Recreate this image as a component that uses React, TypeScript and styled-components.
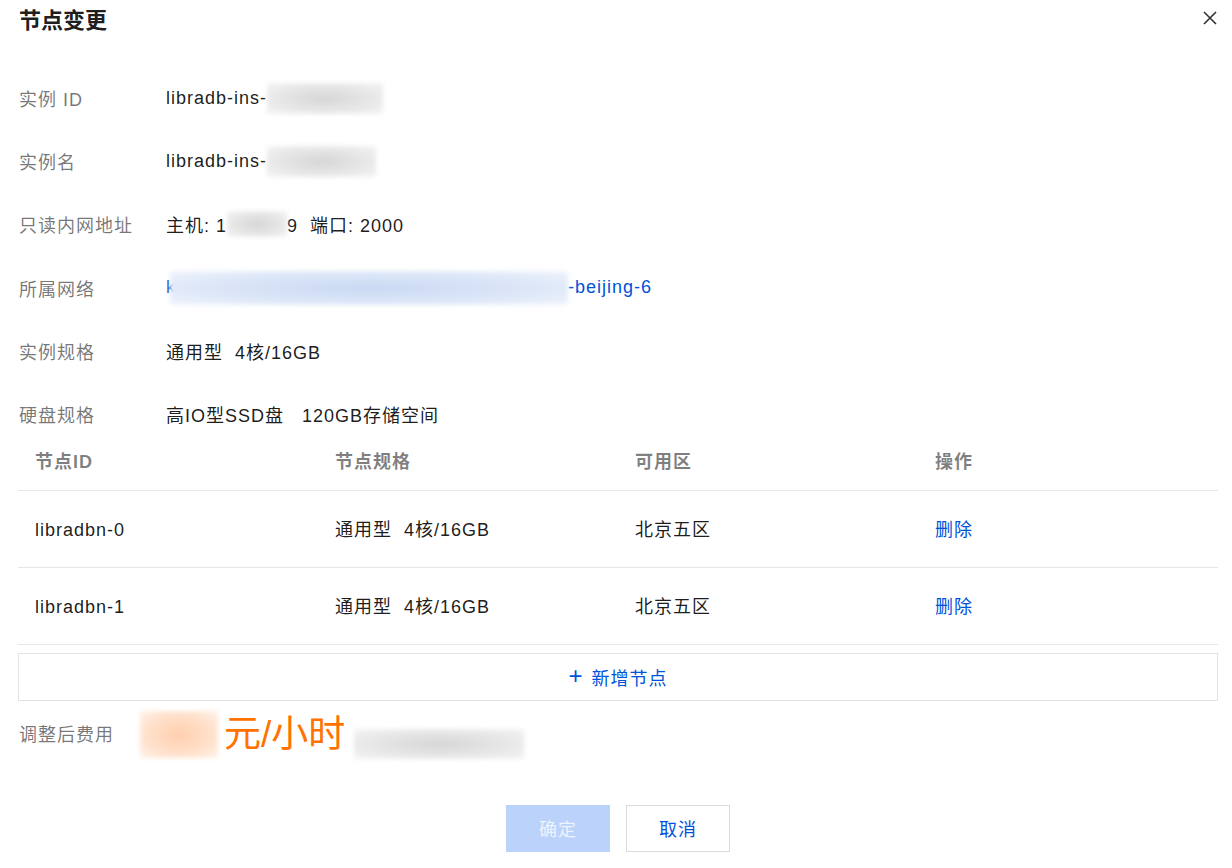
import styled, { createGlobalStyle } from "styled-components";

const GlobalStyle = createGlobalStyle`
  html, body {
    margin: 0;
    padding: 0;
    background: #fff;
  }
  body {
    font-family: "Liberation Sans", "Noto Sans CJK SC", sans-serif;
    color: rgba(0, 0, 0, 0.9);
  }
`;

interface IField {
  label: string;
  value: React.ReactNode;
}

interface INode {
  id: string;
  spec: string;
  zone: string;
}

const nodes: INode[] = [
  { id: "libradbn-0", spec: "通用型  4核/16GB", zone: "北京五区" },
  { id: "libradbn-1", spec: "通用型  4核/16GB", zone: "北京五区" },
];

function App() {
  const fields: IField[] = [
    {
      label: "实例 ID",
      value: (
        <>
          libradb-ins-
          <Blur $w={116} $h={31} $tone="grey" />
        </>
      ),
    },
    {
      label: "实例名",
      value: (
        <>
          libradb-ins-
          <Blur $w={109} $h={31} $tone="grey" />
        </>
      ),
    },
    {
      label: "只读内网地址",
      value: (
        <>
          主机: 1
          <Blur $w={60} $h={26} $tone="grey" />
          9&nbsp;&nbsp;端口: 2000
        </>
      ),
    },
    {
      label: "所属网络",
      value: (
        <LinkText>
          k
          <Blur $w={398} $h={34} $tone="blue" $overlap />
          -beijing-6
        </LinkText>
      ),
    },
    { label: "实例规格", value: "通用型  4核/16GB" },
    { label: "硬盘规格", value: "高IO型SSD盘   120GB存储空间" },
  ];

  return (
    <>
      <GlobalStyle />
      <Dialog>
        <Header>
          <Title>节点变更</Title>
          <CloseButton aria-label="close">
            <svg width="16" height="16" viewBox="0 0 16 16">
              <path
                d="M2 2 L14 14 M14 2 L2 14"
                stroke="#333"
                strokeWidth="1.6"
                fill="none"
              />
            </svg>
          </CloseButton>
        </Header>

        <Form>
          {fields.map((f) => (
            <FieldRow key={f.label}>
              <Label>{f.label}</Label>
              <Value>{f.value}</Value>
            </FieldRow>
          ))}
        </Form>

        <Table>
          <HeadRow>
            <HeadCell>节点ID</HeadCell>
            <HeadCell>节点规格</HeadCell>
            <HeadCell>可用区</HeadCell>
            <HeadCell>操作</HeadCell>
          </HeadRow>
          {nodes.map((n) => (
            <BodyRow key={n.id}>
              <Cell>{n.id}</Cell>
              <Cell>{n.spec}</Cell>
              <Cell>{n.zone}</Cell>
              <Cell>
                <ActionLink>删除</ActionLink>
              </Cell>
            </BodyRow>
          ))}
        </Table>

        <AddButton>
          <Plus>+</Plus>新增节点
        </AddButton>

        <CostRow>
          <CostLabel>调整后费用</CostLabel>
          <Blur $w={78} $h={47} $tone="orange" />
          <Price>元/小时</Price>
          <Blur $w={170} $h={30} $tone="grey" $low />
        </CostRow>

        <Footer>
          <PrimaryButton disabled>确定</PrimaryButton>
          <SecondaryButton>取消</SecondaryButton>
        </Footer>
      </Dialog>
    </>
  );
}

export default App;

const Dialog = styled.div`
  width: 1232px;
  height: 868px;
  box-sizing: border-box;
  padding: 0 14px 0 18px;
  display: flex;
  flex-direction: column;
`;

const Header = styled.div`
  height: 36px;
  display: flex;
  align-items: center;
  justify-content: space-between;
`;

const Title = styled.h2`
  margin: 0 0 0 1px;
  font-size: 22px;
  font-weight: 700;
  color: rgba(0, 0, 0, 0.9);
`;

const CloseButton = styled.button`
  border: 0;
  background: none;
  padding: 0;
  margin-right: -2px;
  width: 20px;
  height: 20px;
  display: flex;
  align-items: center;
  justify-content: center;
  cursor: pointer;
`;

const Form = styled.div`
  margin-top: 46px;
  display: flex;
  flex-direction: column;
  gap: 31.2px;
`;

const FieldRow = styled.div`
  height: 32px;
  display: flex;
  align-items: center;
`;

const Label = styled.div`
  width: 147px;
  flex: none;
  padding-left: 1px;
  font-size: 18px;
  letter-spacing: 1px;
  color: rgba(0, 0, 0, 0.55);
`;

const Value = styled.div`
  font-size: 18px;
  letter-spacing: 1px;
  color: rgba(0, 0, 0, 0.9);
  display: flex;
  align-items: center;
  white-space: pre;
`;

const LinkText = styled.span`
  color: #0052d9;
  display: flex;
  align-items: center;
`;

const tones: Record<string, string> = {
  grey: "radial-gradient(ellipse at center, #d6d6d6 0%, #e8e8e8 60%, #f4f4f4 100%)",
  blue: "radial-gradient(ellipse at center, #c9d8f3 0%, #dde7f8 60%, #f1f5fc 100%)",
  orange: "radial-gradient(ellipse at center, #ffcfae 0%, #ffe1cc 60%, #fff3ea 100%)",
};

const Blur = styled.span<{
  $w: number;
  $h: number;
  $tone: string;
  $overlap?: boolean;
  $low?: boolean;
}>`
  display: inline-block;
  width: ${(p) => p.$w}px;
  height: ${(p) => p.$h}px;
  margin-left: ${(p) => (p.$overlap ? "-6px" : "0")};
  align-self: ${(p) => (p.$low ? "flex-end" : "auto")};
  background: ${(p) => tones[p.$tone]};
  filter: blur(2px);
  flex: none;
`;

const Table = styled.div`
  display: flex;
  flex-direction: column;
  width: 1200px;
`;

const HeadRow = styled.div`
  height: 60px;
  display: grid;
  grid-template-columns: 300px 300px 300px 300px;
  align-items: center;
  border-bottom: 1px solid #e7e7e7;
`;

const HeadCell = styled.div`
  padding-left: 17px;
  font-size: 18px;
  letter-spacing: 1px;
  font-weight: 700;
  color: rgba(0, 0, 0, 0.5);
`;

const BodyRow = styled.div`
  height: 77px;
  box-sizing: border-box;
  padding-top: 3px;
  display: grid;
  grid-template-columns: 300px 300px 300px 300px;
  align-items: center;
  border-bottom: 1px solid #e7e7e7;
`;

const Cell = styled.div`
  padding-left: 17px;
  font-size: 18px;
  line-height: 26px;
  letter-spacing: 1px;
  color: rgba(0, 0, 0, 0.9);
  white-space: pre;
  display: flex;
  align-items: center;
  height: 26px;
`;

const ActionLink = styled.span`
  color: #0052d9;
  cursor: pointer;
`;

const AddButton = styled.div`
  margin-top: 8px;
  width: 1200px;
  height: 48px;
  box-sizing: border-box;
  border: 1px solid #e3e3e3;
  display: flex;
  align-items: center;
  justify-content: center;
  font-size: 18px;
  letter-spacing: 1px;
  color: #0052d9;
  cursor: pointer;
`;

const Plus = styled.span`
  font-size: 24px;
  margin-right: 8px;
  line-height: 1;
  margin-top: -2px;
`;

const CostRow = styled.div`
  margin-top: 10px;
  height: 48px;
  display: flex;
  align-items: center;
`;

const CostLabel = styled.div`
  width: 121px;
  padding-left: 1px;
  margin-top: -3px;
  font-size: 18px;
  letter-spacing: 1px;
  color: rgba(0, 0, 0, 0.55);
`;

const Price = styled.div`
  margin: 0 9px 0 6px;
  font-size: 37px;
  color: #ff7200;
  line-height: 1;
`;

const Footer = styled.div`
  margin-top: 46px;
  display: flex;
  justify-content: center;
  gap: 16px;
`;

const BaseButton = styled.button`
  width: 104px;
  height: 47px;
  box-sizing: border-box;
  font-size: 18px;
  letter-spacing: 1px;
  font-family: "Liberation Sans", "Noto Sans CJK SC", sans-serif;
  cursor: pointer;
`;

const PrimaryButton = styled(BaseButton)`
  border: 1px solid #bbd3fb;
  background: #bbd3fb;
  color: rgba(255, 255, 255, 0.75);
  &:disabled {
    cursor: not-allowed;
  }
`;

const SecondaryButton = styled(BaseButton)`
  border: 1px solid #dcdcdc;
  background: #fff;
  color: #0052d9;
`;
